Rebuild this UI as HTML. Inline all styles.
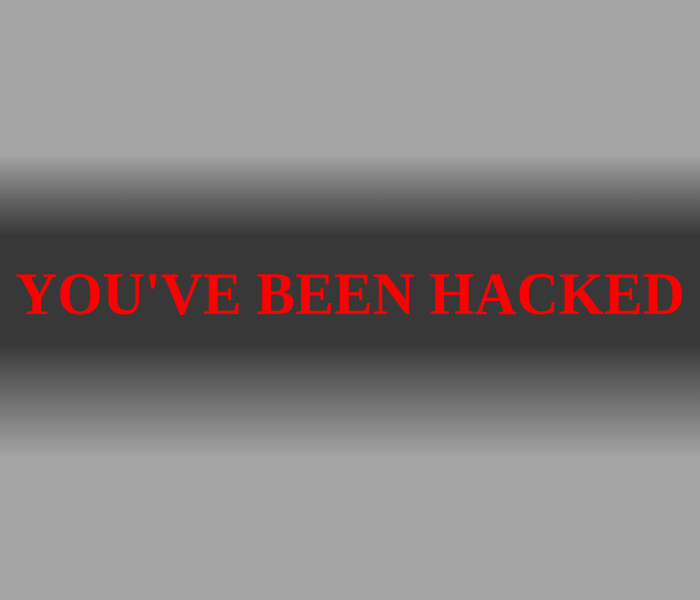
<!DOCTYPE html>
<html><head><style>
html,body{margin:0;padding:0;}
body{width:700px;height:600px;overflow:hidden;position:relative;
background:linear-gradient(to bottom,#a5a5a5 0px,#a5a5a5 155px,#6a6a6a 195px,#383838 235px,#383838 345px,#6a6a6a 395px,#a5a5a5 458px,#a5a5a5 600px);}
.t{position:absolute;left:0;width:700px;top:259px;text-align:center;
font-family:"Liberation Serif",serif;font-weight:bold;font-size:60px;line-height:70px;color:#ff0000;white-space:nowrap;}
.t span{display:inline-block;transform:scaleX(0.97);transform-origin:center;}
</style></head><body>
<div class="t"><span>YOU'VE BEEN HACKED</span></div>
</body></html>
